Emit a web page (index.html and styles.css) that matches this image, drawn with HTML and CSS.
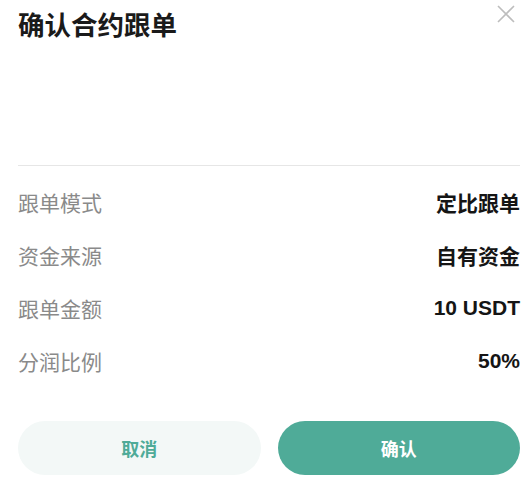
FILE: index.html
```html
<!DOCTYPE html>
<html lang="zh-CN">
<head>
    <meta charset="UTF-8">
    <meta name="viewport" content="width=device-width, initial-scale=1.0">
    <title>确认合约跟单</title>
    <link rel="stylesheet" href="styles.css">
</head>
<body>
<div class="modal">
    <div class="head">
        <h1 class="title">确认合约跟单</h1>
        <span class="close" aria-label="关闭">
            <svg width="18" height="18" viewBox="0 0 18 18"><path d="M1 1L17 17M17 1L1 17" stroke="#bdbdbd" stroke-width="1.6" fill="none"/></svg>
        </span>
    </div>

    <div class="rows">
        <div class="row"><span class="label">跟单模式</span><span class="value">定比跟单</span></div>
        <div class="row"><span class="label">资金来源</span><span class="value">自有资金</span></div>
        <div class="row"><span class="label">跟单金额</span><span class="value">10 USDT</span></div>
        <div class="row"><span class="label">分润比例</span><span class="value">50%</span></div>
    </div>

    <div class="actions">
        <button class="btn btn-cancel">取消</button>
        <button class="btn btn-ok">确认</button>
    </div>
</div>
</body>
</html>
```

FILE: styles.css
```css
* { box-sizing: border-box; }
body { margin: 0; background: #fff; font-family: "Noto Sans CJK SC", "Noto Sans", sans-serif; }
.modal { position: relative; padding: 6px 12px 0 18px; }
.head { height: 160px; border-bottom: 1px solid #e6e6e6; }
.title { margin: 0; font-size: 26.5px; line-height: 36px; font-weight: 700; color: #1a1a1a; }
.close { position: absolute; top: 5px; right: 17px; width: 18px; height: 18px; display: block; }
.close svg { display: block; }
.rows { padding-top: 9px; }
.row { height: 53px; display: flex; align-items: center; justify-content: space-between; font-size: 21px; }
.label { color: #8a8a8a; }
.value { color: #151515; font-weight: 700; font-family: "Liberation Sans", "Noto Sans CJK SC", sans-serif; }
.actions { margin-top: 34px; display: grid; grid-template-columns: 1fr 1fr; gap: 17px; }
.btn { height: 54px; border: 0; border-radius: 27px; font-family: inherit; font-size: 18px; font-weight: 700; cursor: pointer; }
.btn-cancel { background: #f3f8f7; color: #4fab98; }
.btn-ok { background: #4fab98; color: #fff; }
```
